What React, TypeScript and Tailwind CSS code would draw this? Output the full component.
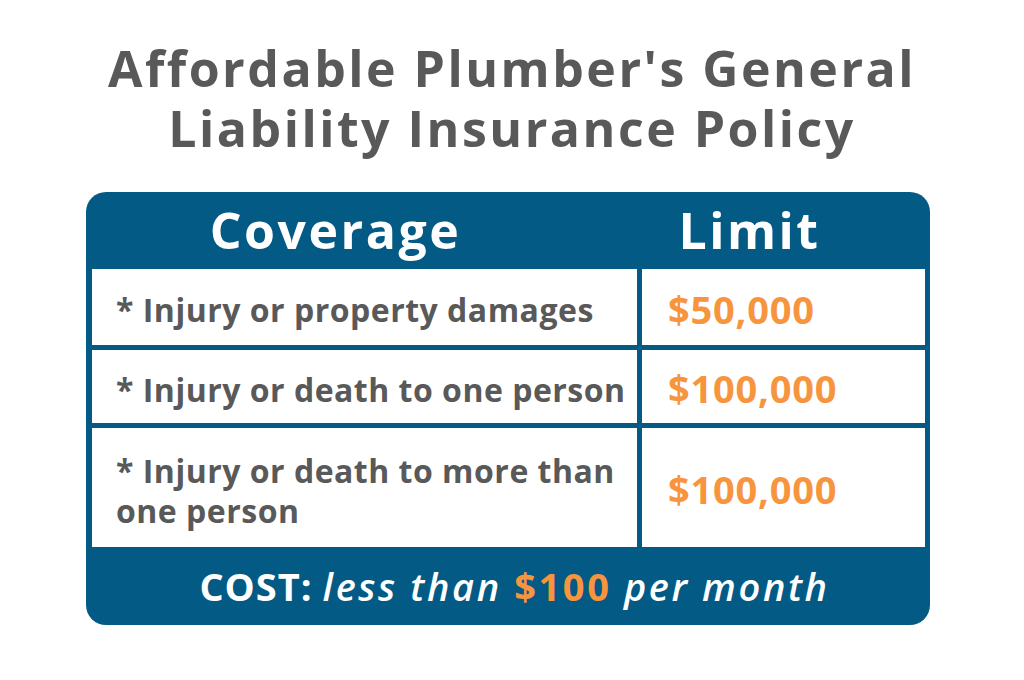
import React from "react";

const font = { fontFamily: '"Open Sans", "Liberation Sans", sans-serif' };

function Row({
  label,
  value,
  h,
}: {
  label: React.ReactNode;
  value: string;
  h: string;
}) {
  return (
    <div className={`flex gap-[5px] ${h}`}>
      <div className="w-[545px] bg-white flex items-center pl-[24px] pr-[8px] text-[32px] font-bold leading-[40px] tracking-[0.5px] text-[#595959]">
        <div className="pt-[6px]">{label}</div>
      </div>
      <div className="w-[283px] bg-white flex items-center pl-[26px] text-[38px] font-bold text-[#f7953f] tracking-[0.8px]">
        <div className="pt-[4px]">{value}</div>
      </div>
    </div>
  );
}

export default function App() {
  return (
    <div
      className="w-[1024px] h-[680px] bg-white flex flex-col items-center"
      style={font}
    >
      <h1 className="mt-[38px] text-center text-[50px] leading-[60px] font-bold text-[#595959] tracking-[2.5px]">
        Affordable Plumber's General
        <br />
        Liability Insurance Policy
      </h1>
      <div className="mt-[34px] mr-[8px] w-[844px] bg-[#035a85] rounded-[20px] pl-[6px] pr-[5px] flex flex-col">
        <div className="h-[77px] flex gap-[5px] text-white text-[50px] font-bold tracking-[2.5px]">
          <div className="w-[545px] flex items-center justify-center pr-[58px]">
            Coverage
          </div>
          <div className="w-[283px] flex items-center justify-center pr-[68px]">
            Limit
          </div>
        </div>
        <div className="flex flex-col gap-[5px]">
          <Row h="h-[76px]" label="* Injury or property damages" value="$50,000" />
          <Row h="h-[73px]" label="* Injury or death to one person" value="$100,000" />
          <Row
            h="h-[119px]"
            label={
              <>
                * Injury or death to more than
                <br />
                one person
              </>
            }
            value="$100,000"
          />
        </div>
        <div className="h-[78px] flex items-center justify-center pl-[12px] text-white text-[38px] font-bold tracking-[1px]">
          <span>COST:</span>
          <span className="ml-[10px] italic font-semibold tracking-[2.6px]">
            less than <span className="text-[#f7953f] not-italic font-bold">$100</span> per month
          </span>
        </div>
      </div>
    </div>
  );
}
